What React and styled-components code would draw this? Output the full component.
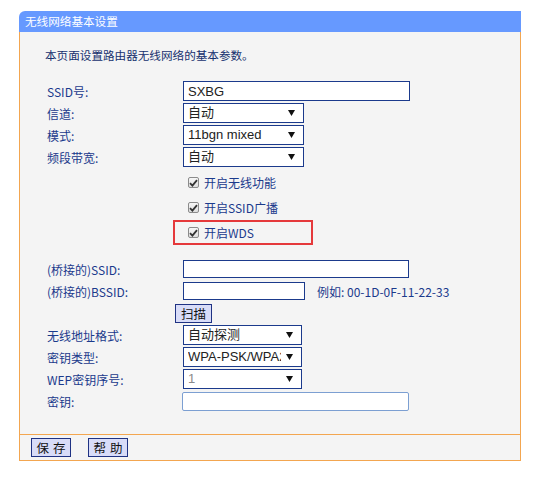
import React from "react";
import styled, { createGlobalStyle } from "styled-components";

const Global = createGlobalStyle`
  html, body { margin: 0; padding: 0; background: #ffffff; }
  body { font-family: "Noto Sans CJK SC", sans-serif; }
  * { box-sizing: border-box; }
`;

const NAVY = "#1b3a8c";
const ORANGE = "#f3a650";
const CJK = `"Noto Sans CJK SC", sans-serif`;
const SANS = `"Liberation Sans", "Noto Sans CJK SC", sans-serif`;

const Panel = styled.div`
  margin: 11px 0 0 19px;
  width: 502px;
  display: flex;
  flex-direction: column;
`;

const Header = styled.div`
  height: 21px;
  background: #6699ff;
  border-top-left-radius: 6px;
  color: #ffffff;
  font-family: ${CJK};
  font-size: 11.6px;
  line-height: 21px;
  padding-left: 6px;
`;

const Body = styled.div`
  background: #f4f4f4;
  border-left: 1px solid ${ORANGE};
  border-right: 1px solid ${ORANGE};
  padding: 16px 0 22px 25px;
  display: flex;
  flex-direction: column;
`;

const Desc = styled.div`
  font-family: ${CJK};
  font-size: 11.6px;
  line-height: 14px;
  height: 14px;
  color: #16306e;
`;

const Form = styled.div`
  margin-top: 18px;
  padding-left: 2px;
  display: flex;
  flex-direction: column;
`;

const Row = styled.div`
  display: grid;
  grid-template-columns: 136px 1fr;
  align-items: center;
  height: ${(p) => p.$h || 22}px;
  margin-top: ${(p) => p.$mt || 0}px;
`;

const Label = styled.span`
  font-family: ${CJK};
  font-size: 12px;
  color: ${NAVY};
  white-space: nowrap;
`;

const Cell = styled.div`
  display: flex;
  align-items: center;
`;

const TextInput = styled.input`
  display: block;
  width: ${(p) => p.$w}px;
  height: ${(p) => p.$ht || 18}px;
  border: 1px solid ${(p) => (p.$soft ? "#7c9fd2" : NAVY)};
  border-radius: ${(p) => (p.$soft ? 2 : 0)}px;
  background: #ffffff;
  padding: 0 4px;
  margin: 0 0 0 ${(p) => p.$ml || 0}px;
  font-family: ${SANS};
  font-size: 13px;
  color: #222;
  outline: none;
`;

const SelectWrap = styled.div`
  position: relative;
  width: ${(p) => p.$w}px;
  height: 20px;
`;

const Select = styled.select`
  display: block;
  appearance: none;
  -webkit-appearance: none;
  width: 100%;
  height: 20px;
  margin: 0;
  border: 1px solid ${NAVY};
  border-radius: 0;
  background-color: #ffffff;
  padding: 0 20px 0 4px;
  font-family: ${SANS};
  font-size: 13px;
  line-height: 18px;
  color: ${(p) => (p.$muted ? "#8a8a8a" : "#222")};
  outline: none;
`;

const Arrow = styled.svg`
  position: absolute;
  right: 9px;
  top: 7px;
  pointer-events: none;
`;

const Check = styled.span`
  width: 11px;
  height: 11px;
  border: 1px solid #8b8b8b;
  border-radius: 2px;
  background: linear-gradient(#f6f6f6, #dedede);
  display: inline-flex;
  align-items: center;
  justify-content: center;
  margin-left: 5px;
  margin-right: 5px;
`;

const CheckText = styled.span`
  font-family: ${CJK};
  font-size: 12px;
  color: ${NAVY};
`;

const Highlight = styled.div`
  display: flex;
  align-items: center;
  width: 140px;
  height: 25px;
  margin-left: -10px;
  padding-left: 8px;
  border: 2px solid #e5393b;
`;

const Hint = styled.span`
  margin-left: 12px;
  font-family: ${CJK};
  font-size: 12px;
  color: ${NAVY};
  white-space: nowrap;
`;

const Button = styled.button`
  height: 19px;
  width: ${(p) => p.$w}px;
  margin: 0 0 0 ${(p) => p.$ml || 0}px;
  padding: 0;
  border: 1px solid #1f3283;
  background: #d8dcf8;
  font-family: ${CJK};
  font-size: 12.5px;
  line-height: 17px;
  letter-spacing: ${(p) => p.$ls || 0}px;
  text-indent: ${(p) => p.$ls || 0}px;
  color: #111;
  cursor: pointer;
`;

const Footer = styled.div`
  height: 27px;
  background: #f4f4f4;
  border: 1px solid ${ORANGE};
  padding: 3px 0 0 11px;
  display: flex;
  align-items: flex-start;
  gap: 17px;
`;

function Dropdown({ w, value, muted }) {
  return (
    <SelectWrap $w={w}>
      <Select $muted={muted} defaultValue={value}>
        <option value={value}>{value}</option>
      </Select>
      <Arrow width="7" height="6" viewBox="0 0 7 6">
        <path d="M0 0 H7 L3.5 6 Z" fill="#111" />
      </Arrow>
    </SelectWrap>
  );
}

function CheckItem({ children }) {
  return (
    <>
      <Check>
        <svg width="9" height="8" viewBox="0 0 9 8">
          <path d="M1 4.2 L3.4 6.6 L8 1.2" stroke="#333" strokeWidth="1.8" fill="none" />
        </svg>
      </Check>
      <CheckText>{children}</CheckText>
    </>
  );
}

export default function App() {
  return (
    <>
      <Global />
      <Panel>
        <Header>无线网络基本设置</Header>
        <Body>
          <Desc>本页面设置路由器无线网络的基本参数。</Desc>
          <Form>
            <Row>
              <Label>SSID号:</Label>
              <Cell><TextInput $w={227} $ht={20} defaultValue="SXBG" /></Cell>
            </Row>
            <Row>
              <Label>信道:</Label>
              <Cell><Dropdown w={121} value="自动" /></Cell>
            </Row>
            <Row>
              <Label>模式:</Label>
              <Cell><Dropdown w={121} value="11bgn mixed" /></Cell>
            </Row>
            <Row>
              <Label>频段带宽:</Label>
              <Cell><Dropdown w={121} value="自动" /></Cell>
            </Row>
            <Row $h={25} $mt={2}>
              <span />
              <Cell><CheckItem>开启无线功能</CheckItem></Cell>
            </Row>
            <Row $h={25}>
              <span />
              <Cell><CheckItem>开启SSID广播</CheckItem></Cell>
            </Row>
            <Row $h={25}>
              <span />
              <Cell>
                <Highlight><CheckItem>开启WDS</CheckItem></Highlight>
              </Cell>
            </Row>
            <Row $mt={13}>
              <Label>(桥接的)SSID:</Label>
              <Cell><TextInput $w={226} /></Cell>
            </Row>
            <Row>
              <Label>(桥接的)BSSID:</Label>
              <Cell>
                <TextInput $w={122} />
                <Hint>例如: 00-1D-0F-11-22-33</Hint>
              </Cell>
            </Row>
            <Row>
              <span />
              <Cell><Button $w={37} $ml={-8}>扫描</Button></Cell>
            </Row>
            <Row>
              <Label>无线地址格式:</Label>
              <Cell><Dropdown w={119} value="自动探测" /></Cell>
            </Row>
            <Row>
              <Label>密钥类型:</Label>
              <Cell><Dropdown w={119} value="WPA-PSK/WPA2-PSK" /></Cell>
            </Row>
            <Row>
              <Label>WEP密钥序号:</Label>
              <Cell><Dropdown w={119} value="1" muted /></Cell>
            </Row>
            <Row>
              <Label>密钥:</Label>
              <Cell><TextInput $w={227} $ht={19} $soft $ml={-1} /></Cell>
            </Row>
          </Form>
        </Body>
        <Footer>
          <Button $w={40} $ls={4}>保存</Button>
          <Button $w={40} $ls={4}>帮助</Button>
        </Footer>
      </Panel>
    </>
  );
}
